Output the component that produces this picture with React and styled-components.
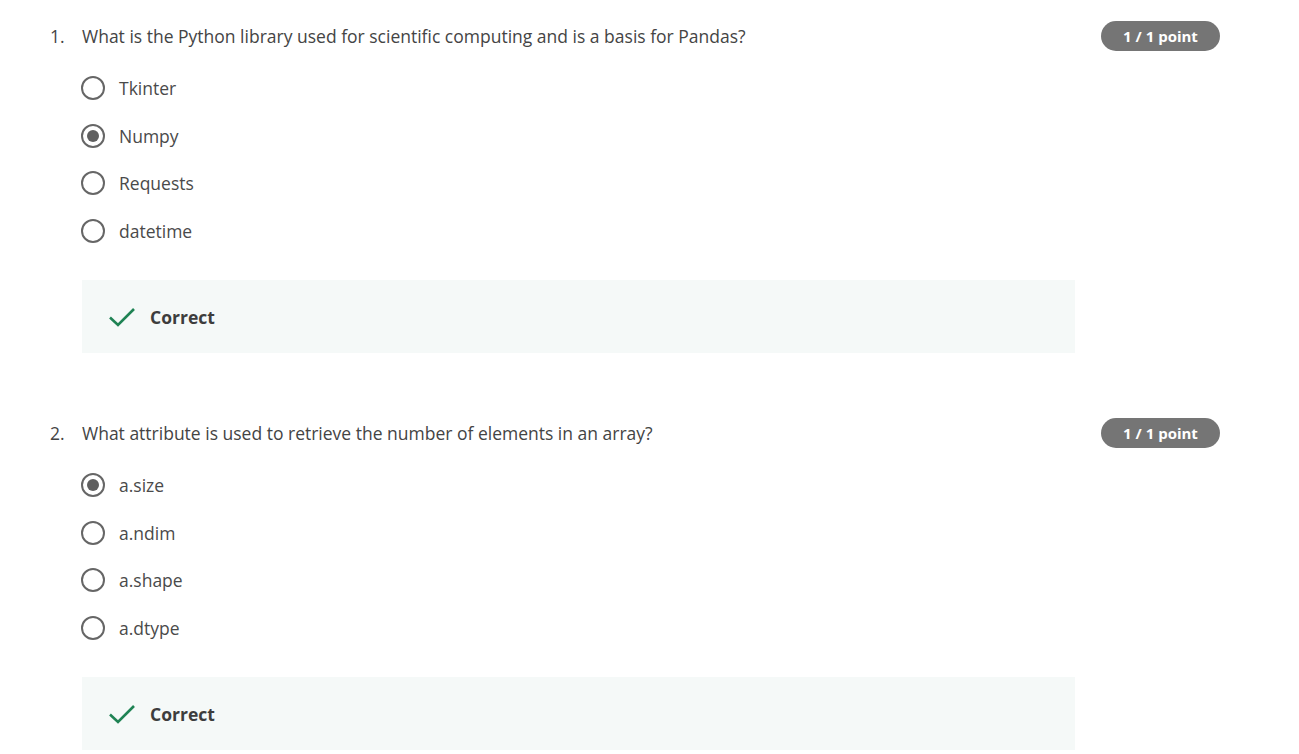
import styled, { createGlobalStyle } from 'styled-components'

const Global = createGlobalStyle`
  body {
    margin: 0;
    background: #fff;
    font-family: "Open Sans", "Liberation Sans", sans-serif;
    color: #3d3d3d;
  }
`;

const Page = styled.div`
  padding: 21px 79px 0 50px;
`;

const Question = styled.section`
  margin-bottom: 65px;
`;

const Header = styled.div`
  display: flex;
  align-items: center;
  justify-content: space-between;
  height: 30px;
`;

const Prompt = styled.div`
  display: flex;
  font-size: 17.5px;
  color: #444;
`;

const Num = styled.span`
  width: 32px;
`;

const Badge = styled.span`
  display: inline-flex;
  align-items: center;
  justify-content: center;
  width: 119px;
  height: 30px;
  border-radius: 15px;
  background: #757575;
  color: #fff;
  font-size: 15px;
  font-weight: 700;
`;

const Options = styled.div`
  display: flex;
  flex-direction: column;
  gap: 23.5px;
  margin: 25px 0 0 31px;
`;

const Option = styled.label`
  display: flex;
  align-items: center;
  gap: 14px;
  font-size: 17.5px;
  color: #4a4a4a;
  height: 24px;
`;

const Radio = styled.span`
  box-sizing: border-box;
  width: 24px;
  height: 24px;
  border-radius: 50%;
  border: 2px solid #666;
  display: flex;
  align-items: center;
  justify-content: center;
  &::after {
    content: "";
    width: 12px;
    height: 12px;
    border-radius: 50%;
    background: ${p => (p.$checked ? '#5f5f5f' : 'transparent')};
  }
`;

const Feedback = styled.div`
  display: flex;
  align-items: center;
  gap: 14px;
  margin: 37.5px 145px 0 32px;
  height: 73px;
  padding-left: 26px;
  background: #f5f9f8;
  font-size: 17.5px;
  font-weight: 700;
  color: #3d3d3d;
`;

const Check = () => (
  <svg width="28" height="22" viewBox="0 0 28 22" fill="none">
    <path d="M2 11.5 L10 19 L26 3" stroke="#1f8354" strokeWidth="2.6" />
  </svg>
);

const quiz = [
  {
    q: 'What is the Python library used for scientific computing and is a basis for Pandas?',
    options: ['Tkinter', 'Numpy', 'Requests', 'datetime'],
    picked: 1,
  },
  {
    q: 'What attribute is used to retrieve the number of elements in an array?',
    options: ['a.size', 'a.ndim', 'a.shape', 'a.dtype'],
    picked: 0,
  },
];

export default function App() {
  return (
    <Page>
      <Global />
      {quiz.map((item, i) => (
        <Question key={i}>
          <Header>
            <Prompt>
              <Num>{i + 1}.</Num>
              <span>{item.q}</span>
            </Prompt>
            <Badge>1 / 1 point</Badge>
          </Header>
          <Options>
            {item.options.map((o, j) => (
              <Option key={o}>
                <Radio $checked={j === item.picked} />
                {o}
              </Option>
            ))}
          </Options>
          <Feedback>
            <Check />
            Correct
          </Feedback>
        </Question>
      ))}
    </Page>
  )
}
